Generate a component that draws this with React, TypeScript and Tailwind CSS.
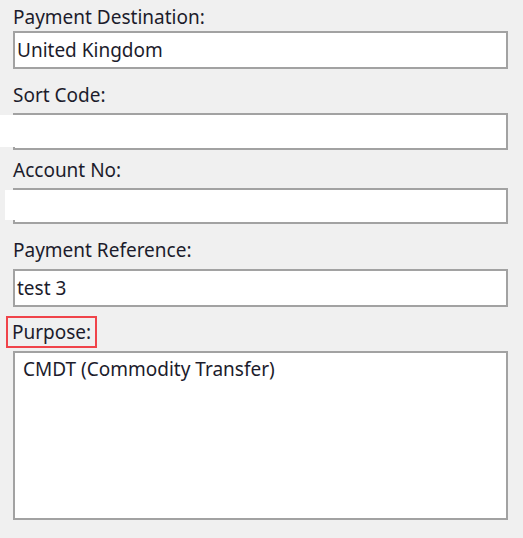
const font = { fontFamily: "'Noto Sans', 'Open Sans', Arial, sans-serif" };

type FieldProps = {
  label: string;
  value?: string;
  wrapClass: string;
  inputClass: string;
  redact?: string;
};

const Field = ({ label, value, wrapClass, inputClass, redact }: FieldProps) => (
  <div className={wrapClass}>
    <div className="h-6 text-[19px] leading-6 text-[#1c1c2c]">{label}</div>
    <div
      className={`relative flex items-center bg-white border-2 border-[#a2a2a2] pl-[2px] text-[19px] leading-6 text-[#1c1c2c] ${inputClass}`}
    >
      {value}
      {redact && <div className={`absolute bg-white ${redact}`} />}
    </div>
  </div>
);

export default function App() {
  return (
    <div className="w-[523px] h-[538px] bg-[#f0f0f0] px-[13px] pt-[5px]" style={font}>
      <Field
        label="Payment Destination:"
        value="United Kingdom"
        wrapClass=""
        inputClass="mt-[2px] h-[38px] w-[495px]"
      />
      <Field
        label="Sort Code:"
        wrapClass="mt-[14px]"
        inputClass="mt-[6px] h-[37px] w-[495px]"
        redact="-left-[15px] top-0 bottom-[1px] w-[120px]"
      />
      <Field
        label="Account No:"
        wrapClass="mt-[8px]"
        inputClass="mt-[6px] h-[36px] w-[495px]"
        redact="-left-[10px] top-0 bottom-[2px] w-[120px]"
      />
      <Field
        label="Payment Reference:"
        value="test 3"
        wrapClass="mt-[14px]"
        inputClass="mt-[7px] h-[38px] w-[495px]"
      />

      {/* Purpose */}
      <div className="mt-[9px] -ml-[7px] w-[91px] h-[32px] border-2 border-[#f0444a] pl-1 pt-[2px] text-[19px] leading-6 text-[#1c1c2c]">
        Purpose:
      </div>
      <div className="mt-[3px] h-[169px] w-[495px] bg-white border-2 border-[#a2a2a2] pl-2 pt-[4px] text-[19px] leading-6 text-[#1c1c2c]">
        CMDT (Commodity Transfer)
      </div>
    </div>
  );
}
